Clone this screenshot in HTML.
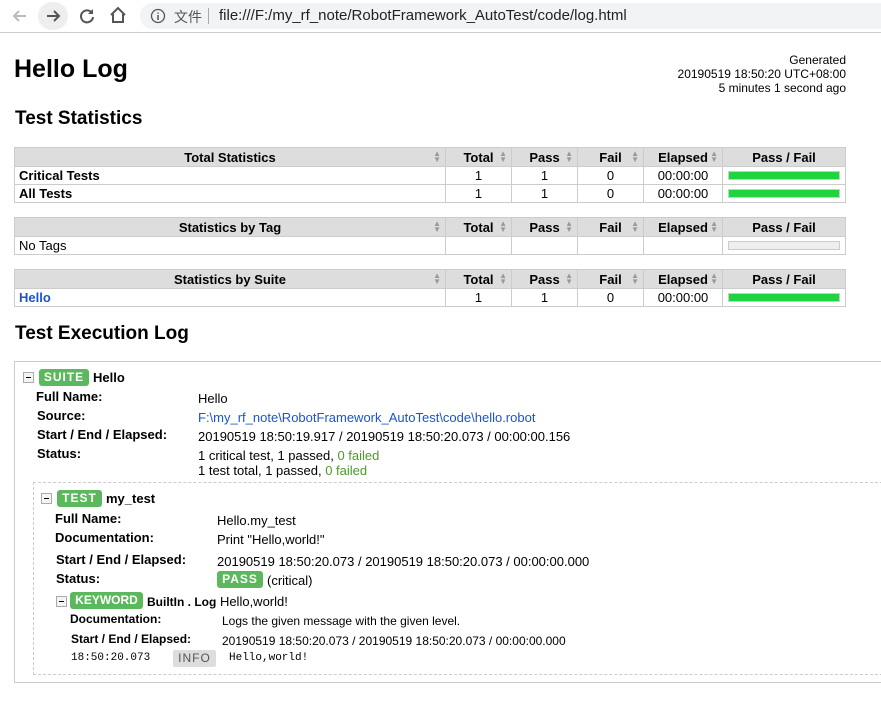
<!DOCTYPE html>
<html><head><meta charset="utf-8"><style>
*{margin:0;padding:0;box-sizing:border-box}
body{width:881px;height:705px;overflow:hidden;background:#fff;font-family:"Liberation Sans",Arial,sans-serif;font-size:13px;color:#000;position:relative}
.a{position:absolute;white-space:nowrap}
.bar{position:absolute;left:0;top:0;width:881px;height:33px;border-bottom:1px solid #ccc;background:#fff}
.url{position:absolute;left:140px;top:3px;width:760px;height:26px;background:#f1f3f4;border-radius:13px}
table{position:absolute;left:14px;width:832px;border-collapse:collapse}
td,th{border:1px solid #ccc;height:18px;padding:0 4px;font-size:13px}
th{background:#ddd;font-weight:bold;position:relative;height:19px}
th .s{position:absolute;right:4px;top:3px;color:#999;font-size:8px;line-height:6px}
td.c{text-align:center}
.g{display:block;height:9px;background:#1ed43f;border:1px solid #ccc;margin:0 1px}
.e{display:block;height:9px;background:#eee;border:1px solid #ccc;margin:0 1px}
.h2{font-size:19px;font-weight:bold}
.lbl{font-weight:bold;font-size:13px}
.tag{position:absolute;background:#5cb85c;color:#fff;font-weight:bold;border-radius:3px;text-align:center;letter-spacing:1px}
.tog{position:absolute;width:11px;height:11px;border:1px solid #aaa;background:#f4f4f4}
.tog:after{content:"";position:absolute;left:2px;top:4px;width:5px;height:1px;background:#000}
a{color:#1a55cc;text-decoration:none}
.gr{color:#4c9a2a}
</style></head><body>
<div class="bar">
<svg class="a" style="left:10px;top:7px" width="20" height="18"><path d="M16 9H4M9 4L4 9l5 5" stroke="#bbb" stroke-width="2" fill="none"/></svg>
<div class="a" style="left:38px;top:2px;width:30px;height:28px;border-radius:15px;background:#eee"></div>
<svg class="a" style="left:44px;top:7px" width="20" height="18"><path d="M3 9h12M10 4l5 5-5 5" stroke="#555" stroke-width="2" fill="none"/></svg>
<svg class="a" style="left:78px;top:7px" width="18" height="18"><path d="M14 6A6 6 0 1 0 15 10" stroke="#555" stroke-width="2" fill="none"/><path d="M15 2v5h-5z" fill="#555"/></svg>
<svg class="a" style="left:109px;top:6px" width="18" height="18"><path d="M2 9L9 2l7 7M4 8v8h10V8" stroke="#555" stroke-width="2" fill="none"/></svg>
<div class="url"></div>
<svg class="a" style="left:150px;top:8px" width="16" height="16"><circle cx="8" cy="8" r="6.5" stroke="#555" fill="none" stroke-width="1.3"/><path d="M8 7v5M8 4.5v1.2" stroke="#555" stroke-width="1.5"/></svg>
<div class="a" style="left:174px;top:7px;font-size:14px;color:#555;font-family:'Liberation Sans','Noto Sans CJK SC',sans-serif">文件</div>
<div class="a" style="left:208px;top:8px;width:1px;height:16px;background:#aaa"></div>
<div class="a" style="left:219px;top:7px;font-size:15px;color:#222">file:///F:/my_rf_note/RobotFramework_AutoTest/code/log.html</div>
</div>

<div class="a" style="left:14px;top:55px;font-size:25px;font-weight:bold">Hello Log</div>
<div class="a" style="right:35px;top:53px;text-align:right;font-size:12px;line-height:14px">Generated<br>20190519 18:50:20 UTC+08:00<br>5 minutes 1 second ago</div>
<div class="a h2" style="left:15px;top:108px">Test Statistics</div>

<table style="top:147px">
<tr><th style="width:431px">Total Statistics<span class="s">▲<br>▼</span></th><th style="width:66px">Total<span class="s">▲<br>▼</span></th><th style="width:66px">Pass<span class="s">▲<br>▼</span></th><th style="width:66px">Fail<span class="s">▲<br>▼</span></th><th style="width:79px">Elapsed<span class="s">▲<br>▼</span></th><th>Pass / Fail</th></tr>
<tr><td><b>Critical Tests</b></td><td class="c">1</td><td class="c">1</td><td class="c">0</td><td class="c">00:00:00</td><td><span class="g"></span></td></tr>
<tr><td><b>All Tests</b></td><td class="c">1</td><td class="c">1</td><td class="c">0</td><td class="c">00:00:00</td><td><span class="g"></span></td></tr>
</table>
<table style="top:217px">
<tr><th style="width:431px">Statistics by Tag<span class="s">▲<br>▼</span></th><th style="width:66px">Total<span class="s">▲<br>▼</span></th><th style="width:66px">Pass<span class="s">▲<br>▼</span></th><th style="width:66px">Fail<span class="s">▲<br>▼</span></th><th style="width:79px">Elapsed<span class="s">▲<br>▼</span></th><th>Pass / Fail</th></tr>
<tr><td>No Tags</td><td></td><td></td><td></td><td></td><td><span class="e"></span></td></tr>
</table>
<table style="top:269px">
<tr><th style="width:431px">Statistics by Suite<span class="s">▲<br>▼</span></th><th style="width:66px">Total<span class="s">▲<br>▼</span></th><th style="width:66px">Pass<span class="s">▲<br>▼</span></th><th style="width:66px">Fail<span class="s">▲<br>▼</span></th><th style="width:79px">Elapsed<span class="s">▲<br>▼</span></th><th>Pass / Fail</th></tr>
<tr><td><a href="#"><b>Hello</b></a></td><td class="c">1</td><td class="c">1</td><td class="c">0</td><td class="c">00:00:00</td><td><span class="g"></span></td></tr>
</table>

<div class="a h2" style="left:15px;top:323px">Test Execution Log</div>
<div class="a" style="left:14px;top:361px;width:880px;height:322px;border:1px solid #ccc"></div>
<div class="tog" style="left:23px;top:372px"></div>
<div class="tag" style="left:39px;top:369px;width:50px;height:17px;line-height:17px;font-size:12px">SUITE</div>
<div class="a lbl" style="left:93px;top:370px">Hello</div>
<div class="a lbl" style="left:36px;top:389px">Full Name:</div><div class="a" style="left:198px;top:391px">Hello</div>
<div class="a lbl" style="left:37px;top:408px">Source:</div><div class="a" style="left:198px;top:410px"><a href="#">F:\my_rf_note\RobotFramework_AutoTest\code\hello.robot</a></div>
<div class="a lbl" style="left:37px;top:427px">Start / End / Elapsed:</div><div class="a" style="left:198px;top:429px">20190519 18:50:19.917 / 20190519 18:50:20.073 / 00:00:00.156</div>
<div class="a lbl" style="left:37px;top:446px">Status:</div><div class="a" style="left:198px;top:448px;line-height:15px">1 critical test, 1 passed, <span class="gr">0 failed</span><br>1 test total, 1 passed, <span class="gr">0 failed</span></div>

<div class="a" style="left:33px;top:482px;width:860px;height:193px;border:1px dashed #ccc"></div>
<div class="tog" style="left:41px;top:493px"></div>
<div class="tag" style="left:57px;top:490px;width:45px;height:17px;line-height:17px;font-size:12px">TEST</div>
<div class="a lbl" style="left:106px;top:491px">my_test</div>
<div class="a lbl" style="left:55px;top:511px">Full Name:</div><div class="a" style="left:217px;top:513px">Hello.my_test</div>
<div class="a lbl" style="left:55px;top:530px">Documentation:</div><div class="a" style="left:217px;top:532px">Print "Hello,world!"</div>
<div class="a lbl" style="left:56px;top:552px">Start / End / Elapsed:</div><div class="a" style="left:217px;top:554px">20190519 18:50:20.073 / 20190519 18:50:20.073 / 00:00:00.000</div>
<div class="a lbl" style="left:56px;top:571px">Status:</div>
<div class="tag" style="left:217px;top:571px;width:46px;height:17px;line-height:17px;font-size:12px">PASS</div><div class="a" style="left:267px;top:573px">(critical)</div>
<div class="tog" style="left:56px;top:596px"></div>
<div class="tag" style="left:70px;top:592px;width:73px;height:17px;line-height:17px;font-size:12px;letter-spacing:0">KEYWORD</div>
<div class="a" style="left:147px;top:594px"><b style="font-size:12px">BuiltIn . Log</b> Hello,world!</div>
<div class="a lbl" style="left:70px;top:612px;font-size:12px">Documentation:</div><div class="a" style="left:222px;top:614px;font-size:12px">Logs the given message with the given level.</div>
<div class="a lbl" style="left:71px;top:632px;font-size:12px">Start / End / Elapsed:</div><div class="a" style="left:222px;top:634px;font-size:12px">20190519 18:50:20.073 / 20190519 18:50:20.073 / 00:00:00.000</div>
<div class="a" style="left:71px;top:652px;font-size:11px;font-family:'Liberation Mono',monospace">18:50:20.073</div>
<div class="a" style="left:173px;top:650px;width:43px;height:17px;background:#ddd;border-radius:2px;text-align:center;line-height:17px;color:#555;font-size:12px;letter-spacing:1px">INFO</div>
<div class="a" style="left:229px;top:652px;font-size:11px;font-family:'Liberation Mono',monospace">Hello,world!</div>
</body></html>
